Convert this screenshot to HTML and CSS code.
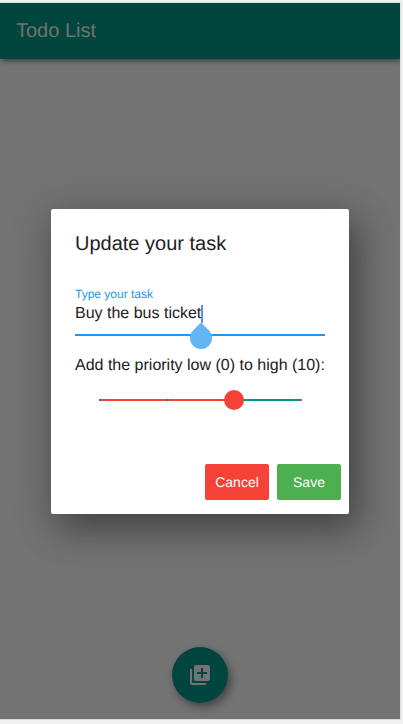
FILE: index.html
```html
<!DOCTYPE html>
<html lang="en">
<head>
<meta charset="utf-8">
<title>Todo List</title>
<link rel="stylesheet" href="styles.css">
</head>
<body>
<div class="app">
  <header class="app-bar"><h1>Todo List</h1></header>
  <main class="content">
    <section class="dialog" role="dialog">
      <h2 class="dialog-title">Update your task</h2>
      <div class="field">
        <div class="field-label">Type your task</div>
        <div class="field-value"><span>Buy the bus ticket</span><span class="caret"><i class="handle"></i></span></div>
      </div>
      <p class="prompt">Add the priority low (0) to high (10):</p>
      <div class="slider">
        <i class="tick"></i>
        <i class="tick"></i>
        <i class="thumb"></i>
        <i class="tick tick-end"></i>
      </div>
      <div class="actions">
        <button class="button cancel">Cancel</button>
        <button class="button save">Save</button>
      </div>
    </section>
  </main>
  <button class="fab" aria-label="Add task">
    <svg viewBox="0 0 24 24" width="24" height="24"><path fill="currentColor" d="M4 6H2v14c0 1.1.9 2 2 2h14v-2H4V6zm16-4H8c-1.1 0-2 .9-2 2v12c0 1.1.9 2 2 2h12c1.1 0 2-.9 2-2V4c0-1.1-.9-2-2-2zm-1 9h-4v4h-2v-4H9V9h4V5h2v4h4v2z"/></svg>
  </button>
</div>
</body>
</html>
```
FILE: styles.css
```css
* { box-sizing: border-box; }

body {
  margin: 0;
  padding: 3px 3px 5px 0;
  height: 724px;
  overflow: hidden;
  background: #f0f0f0;
  font-family: "Liberation Sans", Arial, sans-serif;
  color: #212121;
  text-rendering: geometricPrecision;
}

h1, h2, p { margin: 0; font-weight: 400; }

.app {
  height: 716px;
  display: flex;
  flex-direction: column;
  align-items: center;
  overflow: hidden;
  background: #737373;
  outline: 1px solid #dedede;
}

.app-bar {
  width: 100%;
  height: 56px;
  flex: none;
  display: flex;
  align-items: center;
  padding: 0 0 0 16px;
  background: #00453e;
  box-shadow: 2px 2px 5px rgba(0,0,0,.45);
}

.app-bar h1 { font-size: 20px; line-height: 24px; color: #737373; }

.content { flex: none; height: 588px; padding-top: 150px; }

.dialog {
  width: 298px;
  height: 305px;
  padding: 23px 8px 14px 24px;
  display: flex;
  flex-direction: column;
  background: #fff;
  border-radius: 2px;
  box-shadow: 8px 14px 36px rgba(0,0,0,.36), 2px 8px 46px 4px rgba(0,0,0,.12);
}

.dialog-title { font-size: 20px; line-height: 24px; }

.field {
  width: 250px;
  height: 50px;
  margin-top: 30px;
  border-bottom: 2px solid #2196f3;
}

.field-label { font-size: 12px; line-height: 16px; color: #2196f3; }

.field-value { display: flex; height: 18px; margin-top: 3px; font-size: 16px; line-height: 18px; }

.caret { position: relative; width: 2px; height: 18px; background: #5c8ff5; }

.handle {
  position: absolute;
  left: -11px;
  top: 21.5px;
  width: 22px;
  height: 22px;
  border-radius: 0 50% 50% 50%;
  background: #64b5f6;
  transform: rotate(45deg);
}

.prompt { margin-top: 21px; font-size: 16px; line-height: 18px; white-space: nowrap; }

.slider {
  display: grid;
  grid-template-columns: 67px 57.7px 1fr 2px;
  align-items: center;
  width: 203px;
  height: 20px;
  margin: 15px 0 0 24px;
  background: linear-gradient(90deg, #f44336 135px, #009688 135px) center / 100% 2px no-repeat;
}

.tick { width: 2px; height: 2px; background: #009688; }
.tick-end { background: #f44336; }
.thumb { width: 20px; height: 20px; border-radius: 50%; background: #f44336; }

.actions { display: flex; justify-content: flex-end; gap: 8px; margin-top: auto; }

.button {
  width: 64px;
  height: 36px;
  padding: 0;
  border: 0;
  border-radius: 2px;
  font: 14px/16px "Liberation Sans", Arial, sans-serif;
  text-rendering: geometricPrecision;
  color: #fff;
}

.cancel { background: #f44336; }
.save { background: #4caf50; }

.fab {
  flex: none;
  display: flex;
  align-items: center;
  justify-content: center;
  width: 56px;
  height: 56px;
  padding: 0;
  border: 0;
  border-radius: 50%;
  background: #00453e;
  color: #737373;
  box-shadow: 3px 4px 8px rgba(0,0,0,.42);
}
```
